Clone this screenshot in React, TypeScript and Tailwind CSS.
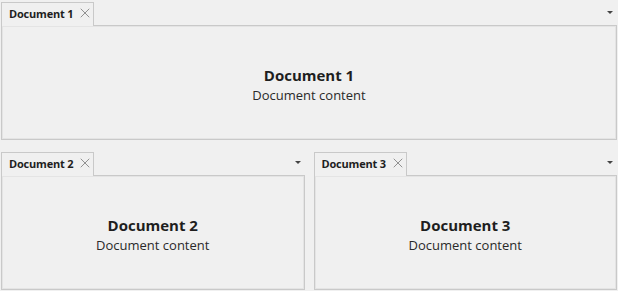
import { X } from 'lucide-react';

function Pane({ title }: { title: string }) {
    return (
        <div className="flex flex-col flex-1 min-w-0 min-h-0">
            <div className="flex items-end h-[24px] relative z-10">
                <div className="h-[24px] w-[93px] shrink-0 border border-b-0 border-[#c9c9c9] bg-[#f0f0f0] flex items-center pl-[7px] gap-[4px] -mb-px pb-[3px] whitespace-nowrap">
                    <span className="text-[11px] font-bold text-[#1e1e1e] leading-none tracking-[-0.2px]">{title}</span>
                    <X size={16} strokeWidth={1.1} className="text-[#6e6e6e] shrink-0" />
                </div>
                <div className="flex-1" />
                <div className="self-center mb-[2px] mr-[4px] w-0 h-0 border-l-[3px] border-r-[3px] border-t-[3px] border-l-transparent border-r-transparent border-t-[#444]" />
            </div>
            <div className="flex-1 border border-[#c9c9c9] shadow-[inset_0_0_0_1px_#e4e4e4] flex flex-col items-center justify-center">
                <div className="text-[15px] font-bold text-[#1e1e1e] leading-[22px]">{title}</div>
                <div className="text-[13px] text-[#2a2a2a] leading-[18px] mb-[-2px]">Document content</div>
            </div>
        </div>
    );
}

export default function App() {
    return (
        <div className="w-[618px] h-[291px] bg-[#f0f0f0] flex flex-col gap-[11px] p-[1px]" style={{ fontFamily: '"Open Sans", "Noto Sans", sans-serif' }}>
            <div className="flex h-[139px]">
                <Pane title="Document 1" />
            </div>
            <div className="flex flex-1 gap-[9px]">
                <Pane title="Document 2" />
                <Pane title="Document 3" />
            </div>
        </div>
    );
}
